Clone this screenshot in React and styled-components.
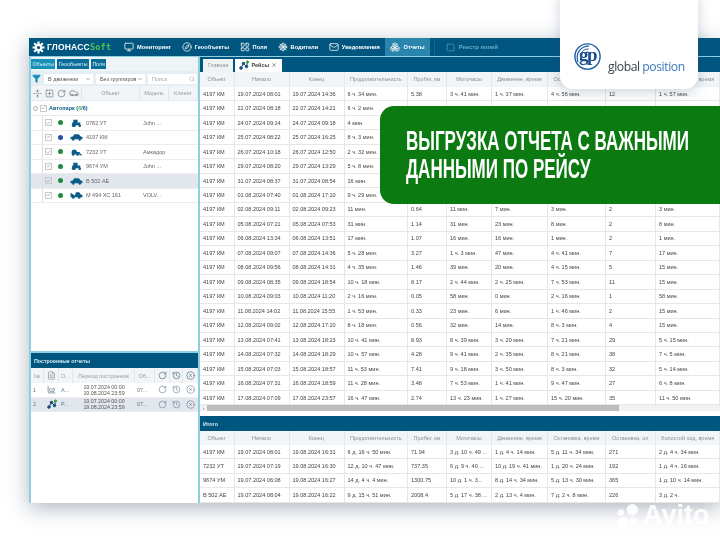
import React from 'react';
import styled, { createGlobalStyle } from 'styled-components';
import {
  Monitor, Compass, LayoutGrid, Mail, Boxes, Square, Filter, Search, ChevronDown,
  RotateCw, History, X, FileText, CircleX, Check, Car,
  ShipWheel, FoldVertical, SquarePlus, ChartArea,
} from 'lucide-react';

const GlobalStyle = createGlobalStyle`
  html, body { margin: 0; padding: 0; background: #fff; }
  * { box-sizing: border-box; }
`;

const COLUMNS = '34.5px 55px 55px 63.5px 39px 45px 56px 58px 50px 64px';

const HEADERS = ['Объект', 'Начало', 'Конец', 'Продолжительность', 'Пробег, км', 'Моточасы', 'Движение, время', 'Остановка, время', 'Остановка, шт', 'Холостой ход, время'];

const trips = [
  ['19.07.2024 08:01', '19.07.2024 14:36', '6 ч. 34 мин.', '5.38', '3 ч. 41 мин.', '1 ч. 37 мин.', '4 ч. 56 мин.', '12', '1 ч. 57 мин.'],
  ['22.07.2024 08:18', '22.07.2024 14:21', '6 ч. 2 мин.', '1.6', '27 мин.', '21 мин.', '5 ч. 34 мин.', '3', '6 мин.'],
  ['24.07.2024 09:14', '24.07.2024 09:18', '4 мин.', '', '', '', '', '', ''],
  ['25.07.2024 08:22', '25.07.2024 16:25', '8 ч. 3 мин.', '', '', '', '', '', ''],
  ['26.07.2024 10:18', '26.07.2024 12:50', '2 ч. 32 мин.', '', '', '', '', '', ''],
  ['29.07.2024 08:20', '29.07.2024 13:29', '5 ч. 8 мин.', '', '', '', '', '', ''],
  ['31.07.2024 08:37', '31.07.2024 08:54', '16 мин.', '', '', '', '', '', ''],
  ['01.08.2024 07:40', '01.08.2024 17:10', '9 ч. 29 мин.', '', '', '', '', '', ''],
  ['02.08.2024 09:11', '02.08.2024 09:23', '11 мин.', '0.64', '11 мин.', '7 мин.', '3 мин.', '2', '3 мин.'],
  ['05.08.2024 07:21', '05.08.2024 07:53', '31 мин.', '1.14', '31 мин.', '23 мин.', '8 мин.', '2', '8 мин.'],
  ['06.08.2024 13:34', '06.08.2024 13:51', '17 мин.', '1.07', '16 мин.', '16 мин.', '1 мин.', '2', '1 мин.'],
  ['07.08.2024 09:07', '07.08.2024 14:36', '5 ч. 28 мин.', '3.27', '1 ч. 3 мин.', '47 мин.', '4 ч. 41 мин.', '7', '17 мин.'],
  ['08.08.2024 09:56', '08.08.2024 14:31', '4 ч. 35 мин.', '1.46', '39 мин.', '20 мин.', '4 ч. 15 мин.', '5', '15 мин.'],
  ['09.08.2024 08:35', '09.08.2024 18:54', '10 ч. 18 мин.', '8.17', '2 ч. 44 мин.', '2 ч. 25 мин.', '7 ч. 53 мин.', '11', '15 мин.'],
  ['10.08.2024 09:03', '10.08.2024 11:20', '2 ч. 16 мин.', '0.05', '58 мин.', '0 мин.', '2 ч. 16 мин.', '1', '58 мин.'],
  ['11.08.2024 14:02', '11.08.2024 15:55', '1 ч. 53 мин.', '0.33', '23 мин.', '6 мин.', '1 ч. 46 мин.', '2', '15 мин.'],
  ['12.08.2024 09:02', '12.08.2024 17:20', '8 ч. 18 мин.', '0.56', '32 мин.', '14 мин.', '8 ч. 3 мин.', '4', '15 мин.'],
  ['13.08.2024 07:41', '13.08.2024 18:23', '10 ч. 41 мин.', '8.93', '8 ч. 39 мин.', '3 ч. 20 мин.', '7 ч. 21 мин.', '29', '5 ч. 15 мин.'],
  ['14.08.2024 07:32', '14.08.2024 18:29', '10 ч. 57 мин.', '4.28', '9 ч. 41 мин.', '2 ч. 35 мин.', '8 ч. 21 мин.', '38', '7 ч. 5 мин.'],
  ['15.08.2024 07:03', '15.08.2024 18:57', '11 ч. 53 мин.', '7.41', '9 ч. 18 мин.', '3 ч. 50 мин.', '8 ч. 3 мин.', '32', '5 ч. 14 мин.'],
  ['16.08.2024 07:31', '16.08.2024 18:59', '11 ч. 28 мин.', '3.48', '7 ч. 53 мин.', '1 ч. 41 мин.', '9 ч. 47 мин.', '27', '6 ч. 8 мин.'],
  ['17.08.2024 07:09', '17.08.2024 23:57', '16 ч. 47 мин.', '2.74', '13 ч. 23 мин.', '1 ч. 27 мин.', '15 ч. 20 мин.', '35', '11 ч. 50 мин.'],
].map((row) => ['4197 КМ', ...row]);

const totals = [
  ['4197 КМ', '19.07.2024 08:01', '19.08.2024 16:31', '6 д. 16 ч. 50 мин.', '71.94', '3 д. 10 ч. 49 ...', '1 д. 4 ч. 14 мин.', '5 д. 11 ч. 34 мин.', '271', '2 д. 4 ч. 34 мин.'],
  ['7232 УТ', '19.07.2024 07:19', '19.08.2024 16:30', '12 д. 10 ч. 47 мин.', '737.35', '6 д. 9 ч. 40 ...', '10 д. 19 ч. 41 мин.', '1 д. 20 ч. 24 мин.', '192', '1 д. 4 ч. 16 мин.'],
  ['9674 УМ', '19.07.2024 06:08', '19.08.2024 16:27', '14 д. 4 ч. 4 мин.', '1300.75', '10 д. 1 ч. 3...', '8 д. 14 ч. 34 мин.', '5 д. 13 ч. 30 мин.', '365', '1 д. 10 ч. 14 мин.'],
  ['В 502 АЕ', '19.07.2024 08:04', '19.08.2024 16:22', '9 д. 15 ч. 51 мин.', '2008.4', '5 д. 17 ч. 38 ...', '2 д. 13 ч. 4 мин.', '7 д. 2 ч. 8 мин.', '226', '3 д. 2 ч.'],
];

const vehicles = [
  { name: '0782 УТ', model: 'John ...', kind: 'tractor', dot: '#1f8a3c' },
  { name: '4197 КМ', model: '', kind: 'car', dot: '#1c55a8' },
  { name: '7232 УТ', model: 'Амкадор', kind: 'loader', dot: '#1f8a3c' },
  { name: '9674 УМ', model: 'John ...', kind: 'tractor', dot: '#1f8a3c' },
  { name: 'В 502 АЕ', model: '', kind: 'car', dot: '#1f8a3c', selected: true },
  { name: 'М 494 ХС 161', model: 'VOLV...', kind: 'truck', dot: '#1f8a3c' },
];

const navItems = [
  { label: 'Мониторинг', Icon: Monitor },
  { label: 'Геообъекты', Icon: Compass },
  { label: 'Поля', Icon: LayoutGrid },
  { label: 'Водители', Icon: ShipWheel },
  { label: 'Уведомления', Icon: Mail },
  { label: 'Отчеты', Icon: Boxes, active: true },
];

const Page = styled.div`
  position: relative;
  width: 720px;
  height: 540px;
  overflow: hidden;
  padding: 38px 0 0 29px;
  background: #fff;
  font-family: 'Liberation Sans', Arial, sans-serif;
  filter: blur(0.3px);
`;

const Window = styled.div`
  width: 691px;
  height: 464.5px;
  display: flex;
  flex-direction: column;
  background: #fff;
  box-shadow: 0 5px 20px rgba(40, 60, 90, 0.38);
`;

const NavBar = styled.div`
  height: 19px;
  flex: none;
  display: flex;
  align-items: center;
  background: #00567f;
  color: #fff;
  border-bottom: 1px solid #8fcfe0;
`;

const Brand = styled.div`
  display: flex;
  align-items: center;
  gap: 2px;
  width: 90px;
  padding-left: 3px;
  font-size: 8.5px;
  font-weight: 700;
  letter-spacing: 0.2px;
`;

const BrandSoft = styled.span`
  margin-left: -2px;
  color: #52c24a;
  font-family: 'DejaVu Sans Mono', monospace;
  font-size: 8.5px;
  font-weight: 700;
`;

const NavItem = styled.div`
  display: flex;
  align-items: center;
  gap: 3px;
  height: 18px;
  padding: 0 5px;
  margin-right: ${(p) => (p.$active ? '0' : '0.6px')};
  font-size: 5.7px;
  font-weight: 700;
  background: ${(p) => (p.$active ? '#2a84ac' : 'transparent')};
`;

const NavExtra = styled.div`
  display: flex;
  align-items: center;
  gap: 4px;
  height: 18px;
  margin-left: 4px;
  padding-left: 11px;
  border-left: 1px solid #0d6a94;
  color: #69aecd;
  font-size: 5.9px;
  font-weight: 700;
`;

const Body = styled.div`
  flex: 1;
  min-height: 0;
  display: flex;
`;

const Sidebar = styled.div`
  width: 171px;
  flex: none;
  display: flex;
  flex-direction: column;
  border-left: 2px solid #8fcfe0;
  border-right: 2px solid #8fcfe0;
  color: #555;
  font-size: 5.5px;
`;

const SideTabs = styled.div`
  height: 14px;
  flex: none;
  display: flex;
  align-items: center;
  gap: 2px;
  background: #eef3f6;
`;

const SideTab = styled.div`
  height: 10px;
  padding: 0 1.5px;
  display: flex;
  align-items: center;
  background: ${(p) => (p.$active ? '#1590b9' : '#0a6d99')};
  color: #dff2f8;
  font-size: 5.2px;
`;

const FilterRow = styled.div`
  height: 15px;
  flex: none;
  display: flex;
  align-items: center;
  gap: 3px;
  padding-left: 1px;
  background: #e4eef3;
`;

const SelectBox = styled.div`
  width: ${(p) => p.$w}px;
  height: 10px;
  padding: 0 2px 0 4px;
  display: flex;
  align-items: center;
  justify-content: space-between;
  background: #fff;
  color: ${(p) => (p.$muted ? '#aaa' : '#555')};
  font-size: 5.5px;
`;

const SideHead = styled.div`
  height: 15px;
  flex: none;
  display: grid;
  grid-template-columns: 51px 58px 29px 29px;
  background: #f1f5f7;
  color: #999;
  border-bottom: 1px solid #e6e9eb;
`;

const HeadCell = styled.div`
  display: flex;
  align-items: center;
  justify-content: center;
  gap: ${(p) => p.$gap || 0}px;
  border-right: 1px solid #e3e8eb;
  overflow: hidden;
  white-space: nowrap;
`;

const ToolIcons = styled(HeadCell)`
  color: #7b868c;
`;

const GroupRow = styled.div`
  height: 15px;
  flex: none;
  display: flex;
  align-items: center;
  gap: 2px;
  padding-left: 2px;
  border-bottom: 1px solid #e8e8e8;
  color: #0b5c86;
  font-weight: 700;
`;

const GroupCount = styled.span`
  color: #57b04f;
`;

const Tick = styled.span`
  width: 7px;
  height: 7px;
  flex: none;
  display: flex;
  align-items: center;
  justify-content: center;
  border: 1px solid #c9c9c9;
  color: #777;
`;

const Collapse = styled.span`
  width: 5px;
  height: 5px;
  flex: none;
  border: 1px solid #aaa;
  border-radius: 50%;
`;

const VehicleRow = styled.div`
  height: 14.5px;
  flex: none;
  display: grid;
  grid-template-columns: 24px 12px 16px 57px 1fr;
  align-items: center;
  background: ${(p) => (p.$selected ? '#e2e6ed' : '#fff')};
  border-bottom: 1px solid #ececec;
`;

const TreeCell = styled.div`
  height: 100%;
  margin-left: 11px;
  padding-left: 2px;
  display: flex;
  align-items: center;
  border-left: 1px solid #dedede;
`;

const Dot = styled.span`
  width: 5px;
  height: 5px;
  margin-left: 3px;
  border-radius: 50%;
  background: ${(p) => p.$color};
`;

const VehicleIcon = styled.div`
  display: flex;
  padding-left: 3px;
  color: #0b5c86;
`;

const VehicleName = styled.div`
  padding-left: 3px;
  color: #666;
`;

const SideGap = styled.div`
  height: 150px;
  flex: none;
  border-bottom: 2px solid #8fcfe0;
`;

const SectionBar = styled.div`
  height: ${(p) => p.$h}px;
  flex: none;
  padding-left: 3px;
  display: flex;
  align-items: center;
  background: #00567f;
  color: #d5edf6;
  font-size: 5.3px;
  font-weight: 700;
`;

const REPORT_COLUMNS = '13px 15px 14px 62px 20px 15px 13px 15px';

const ReportHead = styled.div`
  height: 15px;
  flex: none;
  display: grid;
  grid-template-columns: ${REPORT_COLUMNS};
  background: #f1f5f7;
  color: #999;
`;

const ReportRow = styled.div`
  height: 14.5px;
  flex: none;
  display: grid;
  grid-template-columns: ${REPORT_COLUMNS};
  align-items: center;
  background: ${(p) => (p.$selected ? '#e2e6ed' : '#fff')};
  border-bottom: 1px solid #ececec;
  color: #555;
`;

const ReportCell = styled.div`
  display: flex;
  justify-content: ${(p) => (p.$left ? 'flex-start' : 'center')};
  padding-left: ${(p) => (p.$left ? 2 : 0)}px;
  color: #607a88;
  overflow: hidden;
`;

const Period = styled.div`
  text-align: center;
  font-size: 5.3px;
  line-height: 6px;
  color: #555;
`;

const SideFill = styled.div`
  flex: 1;
`;

const Main = styled.div`
  flex: 1;
  min-width: 0;
  display: flex;
  flex-direction: column;
`;

const TabStrip = styled.div`
  height: 14.5px;
  flex: none;
  display: flex;
  align-items: flex-end;
  gap: 2px;
  padding-left: 3px;
  background: #00567f;
`;

const Tab = styled.div`
  height: 13px;
  display: flex;
  align-items: center;
  gap: 2px;
  padding: 0 4.5px;
  font-size: 5.5px;
  font-weight: ${(p) => (p.$active ? 700 : 400)};
  background: ${(p) => (p.$active ? '#fff' : '#eef2f3')};
  color: ${(p) => (p.$active ? '#444' : '#8d9aa0')};
`;

const GridHead = styled.div`
  height: ${(p) => p.$h}px;
  flex: none;
  display: grid;
  grid-template-columns: ${COLUMNS};
  background: #f1f5f7;
  color: #8a8f93;
  font-size: 5.5px;
`;

const GridRow = styled.div`
  height: 14.47px;
  flex: none;
  display: grid;
  grid-template-columns: ${COLUMNS};
  border-bottom: 1px solid #e7e7e7;
  color: #444;
  font-size: 5.55px;
`;

const Cell = styled.div`
  padding-left: 3px;
  display: flex;
  align-items: center;
  white-space: nowrap;
  border-right: 1px solid #e7e7e7;
  overflow: hidden;
`;

const ScrollTrack = styled.div`
  height: 6px;
  flex: none;
  display: flex;
  align-items: center;
  background: #f1f1f1;
  color: #777;
`;

const ScrollArrow = styled.div`
  width: 7px;
  text-align: center;
  font-size: 4.5px;
`;

const ScrollThumb = styled.div`
  width: 412px;
  height: 100%;
  background: #bdbdbd;
`;

const ScrollGap = styled.div`
  height: 4.5px;
  flex: none;
  background: #fff;
`;

const LogoCard = styled.div`
  position: absolute;
  left: 560px;
  top: -12px;
  width: 138px;
  height: 101px;
  padding: 55px 0 0 14px;
  display: flex;
  gap: 7px;
  background: #fff;
  border-radius: 13px;
  box-shadow: 0 3px 14px rgba(50, 80, 120, 0.25);
`;

const LogoMark = styled.div`
  position: relative;
  width: 27px;
  height: 27px;
  flex: none;
  color: #1b5ea3;
`;

const LogoLetters = styled.span`
  position: absolute;
  left: 5px;
  top: 1px;
  font-family: 'Liberation Serif', serif;
  font-size: 19px;
  font-weight: 700;
  letter-spacing: -1.5px;
  color: #1c4f91;
`;

const LogoText = styled.div`
  align-self: center;
  white-space: nowrap;
  font-family: 'Open Sans', 'Liberation Sans', sans-serif;
  font-size: 12.2px;
  letter-spacing: -0.45px;
  color: #3c4148;
`;

const LogoAccent = styled.span`
  color: #3d7ab8;
`;

const Banner = styled.div`
  position: absolute;
  left: 380px;
  top: 106px;
  width: 340px;
  height: 98px;
  padding: 22px 0 0 26px;
  background: #0b7a10;
  border-radius: 14px 0 0 14px;
  color: #fff;
`;

// no condensed family is installed, so the bold face is squeezed
const BannerLine = styled.div`
  font-family: 'Liberation Sans', sans-serif;
  font-size: 27px;
  line-height: 27.5px;
  font-weight: 700;
  white-space: nowrap;
  transform: scaleX(0.63);
  transform-origin: left center;
`;

const Watermark = styled.div`
  position: absolute;
  left: 614px;
  top: 501px;
  display: flex;
  align-items: center;
  gap: 2px;
  color: rgba(255, 255, 255, 0.9);
  font-size: 27px;
  font-weight: 700;
  line-height: 28px;
`;

const NavIcon = ({ Icon }) => <Icon size={10} strokeWidth={1.8} />;

function BrandGear() {
  return (
    <svg width="13" height="13" viewBox="0 0 24 24" fill="none" stroke="#fff" strokeWidth="4">
      <circle cx="12" cy="12" r="5" />
      <path d="M12 1v5M12 18v5M1 12h5M18 12h5M4 4l4 4M16 16l4 4M20 4l-4 4M8 16l-4 4" />
    </svg>
  );
}

function VehicleGlyph({ kind }) {
  const shapes = {
    tractor: (
      <>
        <path d="M6 1h8v5h5v5H4V6h2z" />
        <circle cx="7" cy="11" r="3.6" />
        <circle cx="18" cy="12" r="2.4" />
      </>
    ),
    car: (
      <>
        <path d="M1 7l4-1 3-4h8l4 4 3 1v4H1z" />
        <circle cx="6" cy="11.5" r="2.2" />
        <circle cx="18" cy="11.5" r="2.2" />
      </>
    ),
    loader: (
      <>
        <path d="M5 3h6l2 4h5v4H3V6z" />
        <path d="M18 9l5 4h-6z" />
        <circle cx="6" cy="11.5" r="2.4" />
        <circle cx="14" cy="11.5" r="2.4" />
      </>
    ),
    truck: (
      <>
        <path d="M1 3l8 5 2-6h6l3 4 3 1v4H1z" />
        <circle cx="6" cy="11.5" r="2.4" />
        <circle cx="17" cy="11.5" r="2.4" />
      </>
    ),
  };
  return (
    <svg width="13" height="8" viewBox="0 0 24 14" fill="currentColor">
      {shapes[kind]}
    </svg>
  );
}

function RouteIcon() {
  return (
    <svg width="10" height="10" viewBox="0 0 20 20" fill="#1c4f7d" stroke="#1c4f7d" strokeWidth="2">
      <path d="M4 16 L9 7 L15 13 L17 4" fill="none" />
      <circle cx="4" cy="16" r="2.6" />
      <circle cx="9" cy="7" r="2.6" />
      <circle cx="15" cy="13" r="2.6" />
      <circle cx="17" cy="4" r="2.2" fill="#3a9a45" stroke="#3a9a45" />
    </svg>
  );
}

function LogoRings() {
  return (
    <svg width="27" height="27" viewBox="0 0 27 27" fill="none" stroke="currentColor">
      <circle cx="13.5" cy="13.5" r="12.6" strokeWidth="1.4" />
      <path d="M4 19C1 10 7 3 15 3.2" strokeWidth="1.2" />
      <path d="M6.5 16C5.5 10 9 6 14.5 6" strokeWidth="1" />
    </svg>
  );
}

function AvitoDots() {
  return (
    <svg width="27" height="25" viewBox="0 0 26 26" fill="currentColor">
      <circle cx="18" cy="7" r="6" />
      <circle cx="6" cy="10" r="3.5" />
      <circle cx="19" cy="19" r="4" />
      <circle cx="8" cy="20" r="5.5" />
    </svg>
  );
}

function ReportActions() {
  return (
    <>
      <ReportCell><RotateCw size={9} strokeWidth={1.5} /></ReportCell>
      <ReportCell><History size={9} strokeWidth={1.5} /></ReportCell>
      <ReportCell><CircleX size={9} strokeWidth={1.5} /></ReportCell>
    </>
  );
}

export default function App() {
  return (
    <Page>
      <GlobalStyle />
      <Window>
        <NavBar>
          <Brand>
            <BrandGear />
            ГЛОНАСС <BrandSoft>Soft</BrandSoft>
          </Brand>
          {navItems.map((item) => (
            <NavItem key={item.label} $active={item.active}>
              <NavIcon Icon={item.Icon} />
              {item.label}
            </NavItem>
          ))}
          <NavExtra>
            <Square size={9} strokeWidth={1.5} />
            Реестр полей
          </NavExtra>
        </NavBar>
        <Body>
          <Sidebar>
            <SideTabs>
              <SideTab $active>Объекты</SideTab>
              <SideTab>Геообъекты</SideTab>
              <SideTab>Поля</SideTab>
            </SideTabs>
            <FilterRow>
              <Filter size={9} color="#1590b9" fill="#1590b9" />
              <SelectBox $w={49}>В движении <ChevronDown size={6} /></SelectBox>
              <SelectBox $w={49}>Без группиров <ChevronDown size={6} /></SelectBox>
              <SelectBox $w={49} $muted>Поиск <Search size={6} /></SelectBox>
            </FilterRow>
            <SideHead>
              <ToolIcons $gap={3}>
                <FoldVertical size={9} />
                <SquarePlus size={9} />
                <RotateCw size={9} />
                <Car size={10} />
              </ToolIcons>
              <HeadCell>Объект</HeadCell>
              <HeadCell>Модель</HeadCell>
              <HeadCell>Клиент</HeadCell>
            </SideHead>
            <GroupRow>
              <Collapse />
              <Tick><Check size={6} strokeWidth={2.5} /></Tick>
              <span>Автопарк (<GroupCount>6</GroupCount>/6)</span>
            </GroupRow>
            {vehicles.map((v) => (
              <VehicleRow key={v.name} $selected={v.selected}>
                <TreeCell><Tick><Check size={6} strokeWidth={2.5} /></Tick></TreeCell>
                <Dot $color={v.dot} />
                <VehicleIcon><VehicleGlyph kind={v.kind} /></VehicleIcon>
                <VehicleName>{v.name}</VehicleName>
                <VehicleName>{v.model}</VehicleName>
              </VehicleRow>
            ))}
            <SideGap />
            <SectionBar $h={15}>Построенные отчеты</SectionBar>
            <ReportHead>
              <HeadCell>№</HeadCell>
              <HeadCell><FileText size={9} /></HeadCell>
              <HeadCell>О...</HeadCell>
              <HeadCell>Период построения</HeadCell>
              <HeadCell>Об...</HeadCell>
              <HeadCell><RotateCw size={9} color="#607a88" /></HeadCell>
              <HeadCell><History size={9} color="#607a88" /></HeadCell>
              <HeadCell><CircleX size={9} color="#607a88" /></HeadCell>
            </ReportHead>
            <ReportRow>
              <ReportCell $left>1</ReportCell>
              <ReportCell><ChartArea size={9} /></ReportCell>
              <ReportCell $left>А...</ReportCell>
              <Period>19.07.2024 00:00<br />19.08.2024 23:59</Period>
              <ReportCell $left>07...</ReportCell>
              <ReportActions />
            </ReportRow>
            <ReportRow $selected>
              <ReportCell $left>2</ReportCell>
              <ReportCell><RouteIcon /></ReportCell>
              <ReportCell $left>Р...</ReportCell>
              <Period>19.07.2024 00:00<br />19.08.2024 23:59</Period>
              <ReportCell $left>07...</ReportCell>
              <ReportActions />
            </ReportRow>
            <SideFill />
          </Sidebar>
          <Main>
            <TabStrip>
              <Tab>Главная</Tab>
              <Tab $active>
                <RouteIcon />
                Рейсы
                <X size={6} />
              </Tab>
            </TabStrip>
            <GridHead $h={15.5}>
              {HEADERS.map((h) => <HeadCell key={h}>{h}</HeadCell>)}
            </GridHead>
            {trips.map((row) => (
              <GridRow key={row[1]}>
                {row.map((value, i) => <Cell key={i}>{value}</Cell>)}
              </GridRow>
            ))}
            <ScrollTrack>
              <ScrollArrow>‹</ScrollArrow>
              <ScrollThumb />
            </ScrollTrack>
            <ScrollGap />
            <SectionBar $h={15.5}>Итого</SectionBar>
            <GridHead $h={13.5}>
              {HEADERS.map((h) => <HeadCell key={h}>{h}</HeadCell>)}
            </GridHead>
            {totals.map((row) => (
              <GridRow key={row[0]}>
                {row.map((value, i) => <Cell key={i}>{value}</Cell>)}
              </GridRow>
            ))}
          </Main>
        </Body>
      </Window>
      <LogoCard>
        <LogoMark>
          <LogoRings />
          <LogoLetters>gp</LogoLetters>
        </LogoMark>
        <LogoText>global <LogoAccent>position</LogoAccent></LogoText>
      </LogoCard>
      <Banner>
        <BannerLine>ВЫГРУЗКА ОТЧЕТА С ВАЖНЫМИ</BannerLine>
        <BannerLine>ДАННЫМИ ПО РЕЙСУ</BannerLine>
      </Banner>
      <Watermark>
        <AvitoDots />
        Avito
      </Watermark>
    </Page>
  );
}
